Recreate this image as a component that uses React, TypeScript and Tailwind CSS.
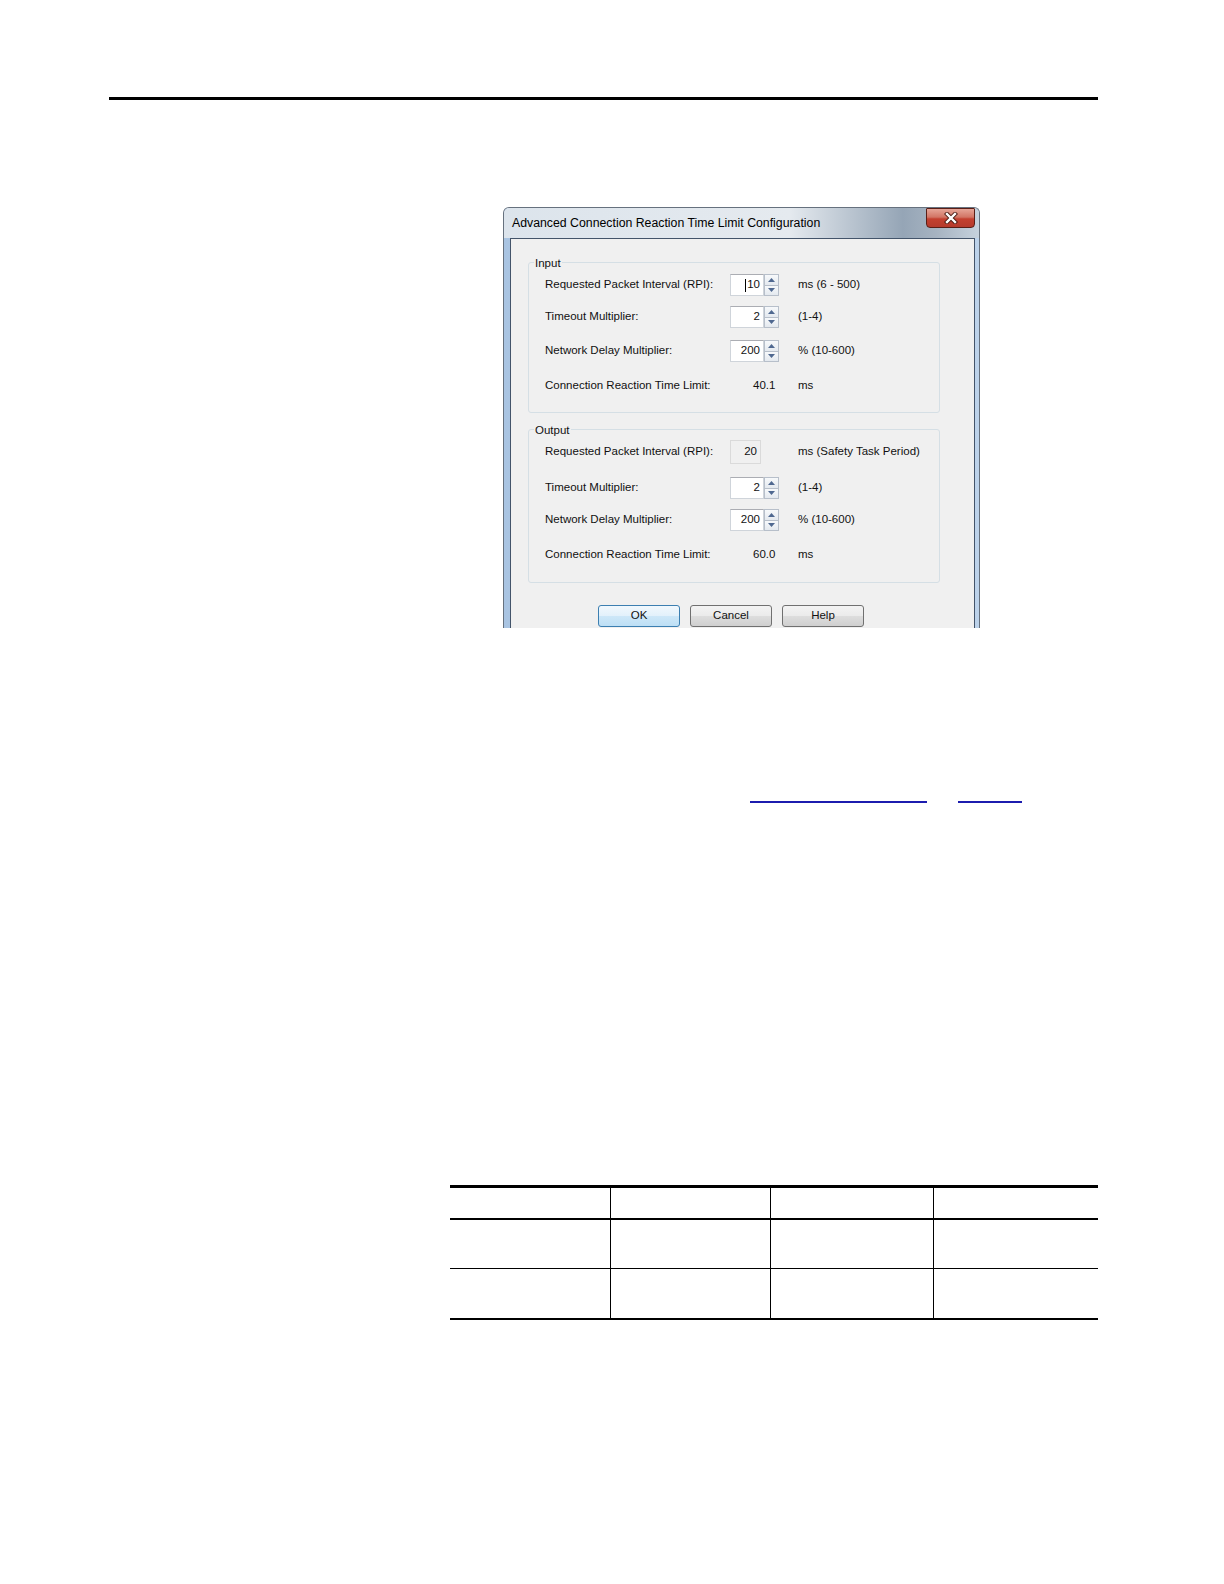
import React from 'react';

type RowProps = {
  label: string;
  unit: string;
  className?: string;
  children: React.ReactNode;
};

const Arrow = ({ up }: { up?: boolean }) => (
  <svg width="7" height="4" viewBox="0 0 7 4">
    <path d={up ? 'M0 4 L3.5 0 L7 4 Z' : 'M0 0 L3.5 4 L7 0 Z'} fill="#4f6890" />
  </svg>
);

const Spin = ({ value, caret }: { value: string; caret?: boolean }) => (
  <div className="flex h-[22px] w-[49px]">
    <div className="flex w-[34px] items-center justify-end border border-[#cfd4da] border-t-[#abadb3] bg-white pr-[3px]">
      {caret && <span className="mr-[1px] h-[13px] w-px bg-black" />}
      <span>{value}</span>
    </div>
    <div className="flex w-[15px] flex-col">
      <div className="flex flex-1 items-center justify-center border border-[#b7bfca] bg-[linear-gradient(180deg,#f7f9fb_0%,#e4e9ef_100%)]">
        <Arrow up />
      </div>
      <div className="-mt-px flex flex-1 items-center justify-center border border-[#b7bfca] bg-[linear-gradient(180deg,#f7f9fb_0%,#e4e9ef_100%)]">
        <Arrow />
      </div>
    </div>
  </div>
);

const Row = ({ label, unit, className, children }: RowProps) => (
  <div className={`flex h-[22px] items-center ${className ?? ''}`}>
    <div className="w-[201px] pl-[16px]">{label}</div>
    <div className="w-[49px]">{children}</div>
    <div className="ml-[19px]">{unit}</div>
  </div>
);

const Group = ({ title, className, children }: { title: string; className?: string; children: React.ReactNode }) => (
  <div className={`ml-[17px] w-[412px] rounded-[3px] border border-[#d5dfe5] ${className ?? ''}`}>
    <div className="-mt-[7px] ml-[5px] h-[14px] w-fit bg-[#f0f0f0] px-[1px] leading-[14px]">{title}</div>
    {children}
  </div>
);

const Btn = ({ children, primary }: { children: React.ReactNode; primary?: boolean }) => (
  <div
    className={
      primary
        ? 'flex h-[22px] w-[82px] items-center justify-center rounded-[3px] border border-[#3c7fb1] bg-[linear-gradient(180deg,#f1f8fd_0%,#e3f1fb_48%,#cde7f8_52%,#bddff5_100%)]'
        : 'flex h-[22px] w-[82px] items-center justify-center rounded-[3px] border border-[#707070] bg-[linear-gradient(180deg,#f3f3f3_0%,#ebebeb_48%,#dddddd_52%,#cfcfcf_100%)]'
    }
  >
    {children}
  </div>
);

export default function App() {
  return (
    <div className="h-[1584px] w-[1224px] overflow-hidden bg-white font-['Liberation_Sans',Arial,sans-serif]">
      <div className="pl-[109px] pt-[97px]">
        <div className="h-[3px] w-[989px] bg-black" />
      </div>

      {/* dialog screenshot */}
      <div className="ml-[503px] mt-[107px] flex h-[421px] w-[477px] flex-col overflow-hidden rounded-t-[6px] border border-b-0 border-[#66717e] bg-[linear-gradient(90deg,#a9c4e2_0%,#bcd2ea_100%)] text-[11.5px] text-[#111]">
        <div className="flex h-[30px] shrink-0 items-start justify-between bg-[linear-gradient(90deg,#dce4ec_0%,#e5eaef_60%,#95a5b6_84%,#a6b3c1_91%,#c6d2dd_100%)] pl-[8px] pr-[4px]">
          <span className="self-center text-[12.3px] text-black">Advanced Connection Reaction Time Limit Configuration</span>
          <div className="flex h-[20px] w-[49px] items-center justify-center rounded-b-[4px] rounded-t-[1px] border border-[#5a1e16] bg-[linear-gradient(180deg,#e6a597_0%,#d27565_45%,#c3402f_55%,#b53a2c_100%)]">
            <svg width="14" height="12" viewBox="0 0 14 12">
              <path d="M3 2 L11 10 M11 2 L3 10" stroke="#4a1a12" strokeWidth="4.2" strokeLinecap="square" />
              <path d="M3 2 L11 10 M11 2 L3 10" stroke="#ffffff" strokeWidth="2.4" strokeLinecap="square" />
            </svg>
          </div>
        </div>

        <div className="ml-[6px] w-[465px] flex-1 border border-b-0 border-[#43546a] bg-[#f0f0f0] pt-[23px]">
          <Group title="Input" className="pb-[15px]">
            <Row label="Requested Packet Interval (RPI):" unit="ms (6 - 500)" className="mt-[4px]">
              <Spin value="10" caret />
            </Row>
            <Row label="Timeout Multiplier:" unit="(1-4)" className="mt-[10px]">
              <Spin value="2" />
            </Row>
            <Row label="Network Delay Multiplier:" unit="% (10-600)" className="mt-[12px]">
              <Spin value="200" />
            </Row>
            <Row label="Connection Reaction Time Limit:" unit="ms" className="mt-[13px]">
              <div className="pl-[23px]">40.1</div>
            </Row>
          </Group>

          <Group title="Output" className="mt-[16px] pb-[16px]">
            <Row label="Requested Packet Interval (RPI):" unit="ms (Safety Task Period)" className="mt-[4px]">
              <div className="flex h-[24px] w-[31px] items-center justify-end border border-[#dadada] bg-[#f0f0f0] pr-[3px]">20</div>
            </Row>
            <Row label="Timeout Multiplier:" unit="(1-4)" className="mt-[14px]">
              <Spin value="2" />
            </Row>
            <Row label="Network Delay Multiplier:" unit="% (10-600)" className="mt-[10px]">
              <Spin value="200" />
            </Row>
            <Row label="Connection Reaction Time Limit:" unit="ms" className="mt-[13px]">
              <div className="pl-[23px]">60.0</div>
            </Row>
          </Group>

          <div className="ml-[87px] mt-[22px] flex gap-[10px]">
            <Btn primary>OK</Btn>
            <Btn>Cancel</Btn>
            <Btn>Help</Btn>
          </div>
        </div>
      </div>

      {/* link underlines */}
      <div className="ml-[750px] mt-[173px] flex">
        <span className="h-[2px] w-[177px] bg-[#1c1cae]" />
        <span className="ml-[31px] h-[2px] w-[64px] bg-[#1c1cae]" />
      </div>

      {/* table */}
      <div className="ml-[450px] mt-[382px] w-[648px] border-b-[2px] border-t-[3px] border-black">
        <div className="grid h-[32px] grid-cols-[160px_160px_163px_165px] border-b-[2px] border-black">
          <div />
          <div className="border-l border-black" />
          <div className="border-l border-black" />
          <div className="border-l border-black" />
        </div>
        <div className="grid h-[49px] grid-cols-[160px_160px_163px_165px] border-b border-black">
          <div />
          <div className="border-l border-black" />
          <div className="border-l border-black" />
          <div className="border-l border-black" />
        </div>
        <div className="grid h-[49px] grid-cols-[160px_160px_163px_165px]">
          <div />
          <div className="border-l border-black" />
          <div className="border-l border-black" />
          <div className="border-l border-black" />
        </div>
      </div>
    </div>
  );
}
